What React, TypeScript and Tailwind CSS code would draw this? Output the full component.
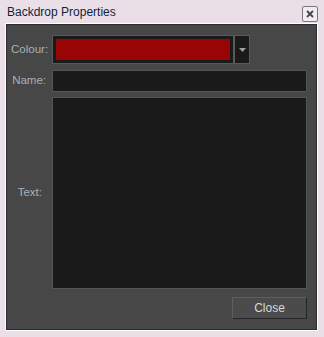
export default function App() {
  return (
    <div
      className="w-[324px] h-[337px] bg-[#ebdfe7] flex flex-col"
      style={{ fontFamily: '"Liberation Sans", Arial, sans-serif' }}
    >
      {/* Title bar */}
      <div className="h-[23px] flex items-center justify-between pl-[7px] pr-[6px] pt-[1px]">
        <span className="text-[12px] text-[#0f1f3d] leading-none">Backdrop Properties</span>
        <button className="w-[16px] h-[16px] rounded-[2px] border border-[#7d757b] bg-[#f1ecf0] flex items-center justify-center mt-[3px]">
          <svg width="8" height="8" viewBox="0 0 8 8">
            <path d="M1 1 L7 7 M7 1 L1 7" stroke="#444" strokeWidth="1.8" />
          </svg>
        </button>
      </div>

      {/* Body panel */}
      <div className="ml-[5px] mr-[6px] mb-[6px] flex-1 border border-white">
        <div className="h-full border border-[#2c2c2c] bg-[#474747] pt-[10px] pl-[4px] pr-[9px] pb-[10px] flex flex-col text-[11.5px] text-[#a9b0b8]">
          {/* Colour */}
          <div className="flex items-center h-[29px]">
            <span className="w-[35px] text-right">Colour:</span>
            <div className="ml-[6px] w-[182px] h-full border border-[#5a5a5a] bg-[#1a1a1a] p-[3px]">
              <div className="w-full h-full bg-[#990505]" />
            </div>
            <div className="w-[16px] h-full border border-[#5a5a5a] bg-[#1a1a1a] flex items-center justify-center">
              <svg width="7" height="4" viewBox="0 0 7 4">
                <path d="M0 0 L7 0 L3.5 4 Z" fill="#a0a0a0" />
              </svg>
            </div>
          </div>

          {/* Name */}
          <div className="flex items-center h-[22px] mt-[6px]">
            <span className="w-[35px] text-right">Name:</span>
            <div className="ml-[6px] flex-1 h-full border border-[#555] bg-[#1a1a1a]" />
          </div>

          {/* Text */}
          <div className="flex items-center h-[192px] mt-[5px]">
            <span className="w-[35px] text-right pr-[4px]">Text:</span>
            <div className="ml-[6px] flex-1 h-full border border-[#555] bg-[#1a1a1a]" />
          </div>

          {/* Footer */}
          <div className="flex justify-end mt-[8px]">
            <button className="w-[75px] h-[22px] bg-[#4b4b4b] border border-t-[#5e5e5e] border-l-[#5e5e5e] border-b-[#262626] border-r-[#262626] text-[#d8d8d8] text-[12px] flex items-center justify-center">
              Close
            </button>
          </div>
        </div>
      </div>
    </div>
  )
}
